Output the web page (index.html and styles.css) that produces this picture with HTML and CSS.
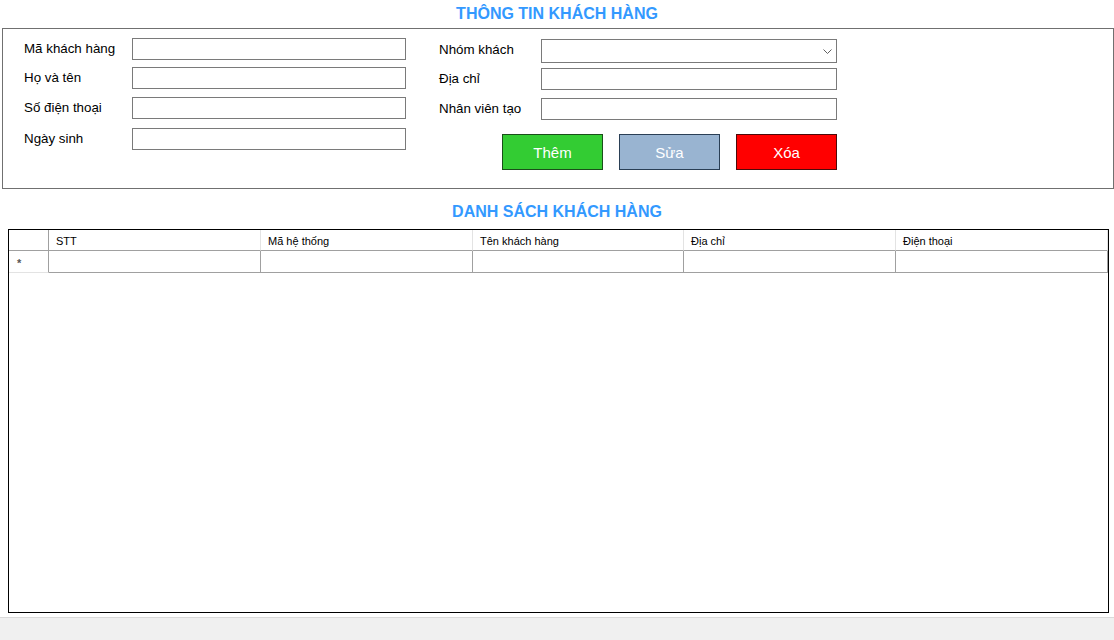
FILE: index.html
```html
<!DOCTYPE html>
<html lang="vi">
<head>
<meta charset="utf-8">
<title>Thông tin khách hàng</title>
<link rel="stylesheet" href="styles.css">
</head>
<body>
<div class="page">
  <div class="title title-top">THÔNG TIN KHÁCH HÀNG</div>
  <div class="group">
    <div class="form form-left">
      <div class="lbl">Mã khách hàng</div><input class="txt" type="text">
      <div class="lbl">Họ và tên</div><input class="txt" type="text">
      <div class="lbl">Số điện thoại</div><input class="txt" type="text">
      <div class="lbl">Ngày sinh</div><input class="txt" type="text">
    </div>
    <div class="form form-right">
      <div class="lbl">Nhóm khách</div>
      <div class="combo">
        <svg class="chev" width="9" height="5" viewBox="0 0 9 5"><path d="M0.5 0.5 L4.5 4.5 L8.5 0.5" fill="none" stroke="#606060" stroke-width="1"/></svg>
      </div>
      <div class="lbl">Địa chỉ</div><input class="txt txt-r" type="text">
      <div class="lbl">Nhân viên tạo</div><input class="txt txt-r" type="text">
      <div class="buttons">
        <button class="btn btn-add">Thêm</button>
        <button class="btn btn-edit">Sửa</button>
        <button class="btn btn-del">Xóa</button>
      </div>
    </div>
  </div>
  <div class="title title-list">DANH SÁCH KHÁCH HÀNG</div>
  <div class="grid">
    <div class="grow head">
      <div class="cell rh"></div>
      <div class="cell">STT</div>
      <div class="cell">Mã hệ thống</div>
      <div class="cell">Tên khách hàng</div>
      <div class="cell">Địa chỉ</div>
      <div class="cell">Điện thoại</div>
    </div>
    <div class="grow data">
      <div class="cell rh"><span class="star">*</span></div>
      <div class="cell"></div>
      <div class="cell"></div>
      <div class="cell"></div>
      <div class="cell"></div>
      <div class="cell"></div>
    </div>
  </div>
  <div class="status"></div>
</div>
</body>
</html>
```

FILE: styles.css
```css
html, body {
  margin: 0;
  padding: 0;
  background: #ffffff;
}
.page {
  width: 1114px;
  height: 640px;
  overflow: hidden;
  font-family: "Liberation Sans", Arial, sans-serif;
  color: #000;
}
.title {
  box-sizing: border-box;
  text-align: center;
  font-weight: bold;
  font-size: 16px;
  line-height: 18px;
  color: #3399ff;
}
.title-top {
  height: 28px;
  padding-top: 5px;
}
.title-list {
  height: 40px;
  padding-top: 14px;
}
.group {
  box-sizing: border-box;
  margin-left: 2px;
  width: 1112px;
  height: 161px;
  border: 1px solid #707070;
  display: flex;
  align-items: flex-start;
}
.form {
  display: grid;
  align-items: start;
}
.form-left {
  padding-top: 9px;
  padding-left: 21px;
  grid-template-columns: 108px 274px;
  grid-template-rows: 29px 30px 31px 22px;
}
.form-right {
  padding-top: 10px;
  margin-left: 33px;
  grid-template-columns: 102px 296px;
  grid-template-rows: 29px 30px 36px 36px;
}
.lbl {
  height: 20px;
  display: flex;
  align-items: center;
  font-size: 13.33px;
  white-space: nowrap;
}
.txt {
  box-sizing: border-box;
  width: 274px;
  height: 22px;
  margin: 0;
  padding: 0 3px;
  border: 1px solid #7a7a7a;
  background: #fff;
  outline: none;
  font-family: inherit;
  font-size: 13.33px;
}
.txt-r {
  width: 296px;
}
.combo {
  box-sizing: border-box;
  width: 296px;
  height: 24px;
  border: 1px solid #7a7a7a;
  background: #fff;
  display: flex;
  align-items: center;
  justify-content: flex-end;
  padding-right: 4px;
}
.chev {
  display: block;
  margin-top: 1px;
}
.buttons {
  grid-column: 1 / 3;
  justify-self: end;
  display: flex;
  gap: 16px;
}
.btn {
  box-sizing: border-box;
  width: 101px;
  height: 36px;
  margin: 0;
  padding: 0;
  font-family: inherit;
  font-size: 15px;
  color: #fff;
  cursor: pointer;
}
.btn-add {
  background: #33cc33;
  border: 1px solid #1a4f1a;
}
.btn-edit {
  background: #99b4d1;
  border: 1px solid #2a3f55;
}
.btn-del {
  background: #ff0000;
  border: 1px solid #4d0a0a;
}
.grid {
  box-sizing: border-box;
  margin-left: 8px;
  width: 1101px;
  height: 384px;
  border: 1px solid #000;
  background: #fff;
}
.grow {
  display: grid;
  grid-template-columns: 40px 212px 212px 211px 212px 212px;
}
.cell {
  box-sizing: border-box;
  font-size: 11px;
  display: flex;
  align-items: center;
  padding-left: 7px;
  white-space: nowrap;
}
.head .cell {
  height: 21px;
  padding-top: 1px;
  border-bottom: 1px solid #a0a0a0;
  border-right: 1px solid #e3e3e3;
}
.head .cell.rh {
  border-right: 1px solid #a0a0a0;
}
.data .cell {
  height: 22px;
  border-bottom: 1px solid #a0a0a0;
  border-right: 1px solid #a0a0a0;
}
.data .cell.rh {
  border-bottom: 1px solid #e3e3e3;
  padding-left: 8px;
}
.star {
  font-size: 11px;
  font-weight: bold;
  color: #555;
  line-height: 11px;
  margin-top: 3px;
}
.status {
  margin-top: 4px;
  height: 23px;
  border-top: 1px solid #dadada;
  background: #f0f0f0;
}
```
